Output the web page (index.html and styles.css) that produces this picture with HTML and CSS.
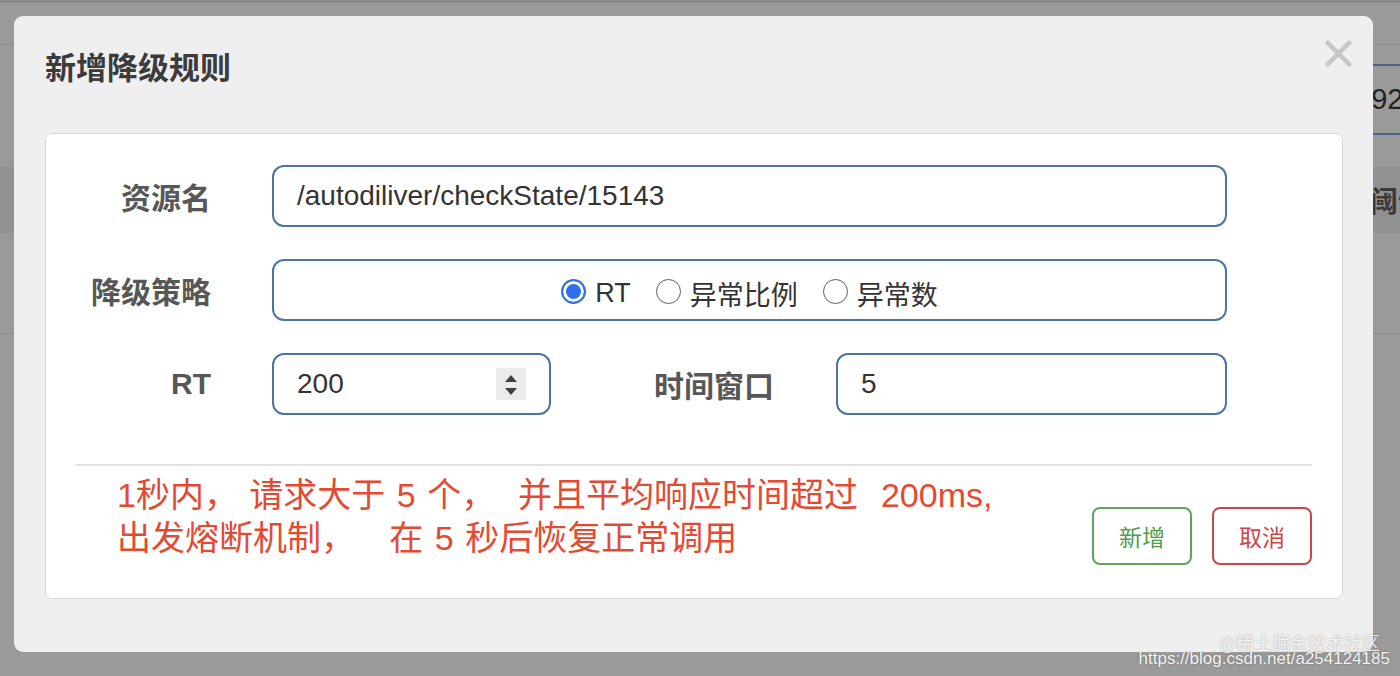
FILE: index.html
```html
<!DOCTYPE html>
<html lang="zh-CN">
<head>
<meta charset="utf-8">
<title>新增降级规则</title>
<link rel="stylesheet" href="styles.css">
</head>
<body>
<div class="page">
  <div class="bg-top"></div>
  <div class="bg-nav"></div>
  <div class="bg-filter"><div class="bg-field">192.168.0.1</div></div>
  <div class="bg-thead"><span class="bg-th">阈值</span></div>
  <div class="bg-tbody"></div>
</div>

<div class="modal">
  <div class="modal-header">
    <h2 class="modal-title">新增降级规则</h2>
    <button class="close" aria-label="关闭">
      <svg width="27" height="27" viewBox="0 0 27 27"><path d="M3 3 L24 24 M24 3 L3 24" stroke="#c6c6c6" stroke-width="4.5" stroke-linecap="square"/></svg>
    </button>
  </div>
  <div class="panel">
    <div class="form">
      <div class="row">
        <label class="label">资源名</label>
        <div class="input grow">/autodiliver/checkState/15143</div>
      </div>
      <div class="row">
        <label class="label">降级策略</label>
        <div class="input grow radios">
          <span class="radio-item"><span class="radio checked"></span><span class="radio-text">RT</span></span>
          <span class="radio-item"><span class="radio"></span><span class="radio-text">异常比例</span></span>
          <span class="radio-item"><span class="radio"></span><span class="radio-text">异常数</span></span>
        </div>
      </div>
      <div class="row">
        <label class="label">RT</label>
        <div class="input small">
          <span class="val">200</span>
          <span class="spinner">
            <svg width="30" height="32" viewBox="0 0 30 32"><path d="M9 14 L21 14 L15 7 Z M9 20 L21 20 L15 27 Z" fill="#404040"/></svg>
          </span>
        </div>
        <label class="label2">时间窗口</label>
        <div class="input grow">5</div>
      </div>
    </div>
    <div class="divider"></div>
    <div class="footer">
      <p class="note">1秒内， 请求大于 5 个，  并且平均响应时间超过  200ms,
出发熔断机制，   在 5 秒后恢复正常调用</p>
      <div class="actions">
        <button class="btn btn-ok">新增</button>
        <button class="btn btn-cancel">取消</button>
      </div>
    </div>
  </div>
</div>

<div class="watermark">
  <span class="wm1">@稀土掘金技术社区</span>
  <span class="wm2">https://blog.csdn.net/a254124185</span>
</div>
</body>
</html>
```

FILE: styles.css
```css
* { box-sizing: border-box; }
html, body {
  margin: 0;
  padding: 0;
  width: 1400px;
  height: 676px;
  overflow: hidden;
  background: #9a9a9a;
  font-family: "Liberation Sans", "Noto Sans CJK SC", sans-serif;
}
.page {
  width: 1400px;
  height: 676px;
  display: flex;
  flex-direction: column;
}
.bg-top { height: 3px; background: #8b8b8b; }
.bg-nav { height: 42px; border-bottom: 1px solid #8c8c8c; }
.bg-filter { height: 122px; display: flex; }
.bg-field {
  margin: 19px 0 0 auto;
  width: 80px;
  height: 71px;
  border-top: 2px solid #4b6185;
  border-bottom: 2px solid #4b6185;
  padding-left: 35px;
  display: flex;
  align-items: center;
  font-size: 29px;
  color: #222;
  white-space: nowrap;
  overflow: hidden;
}
.bg-thead {
  height: 66px;
  background: #919191;
  display: flex;
  align-items: center;
  padding-left: 1370px;
  white-space: nowrap;
  overflow: hidden;
}
.bg-th { font-family: "Noto Sans CJK SC", sans-serif; font-weight: 700; font-size: 28px; color: #3a3a3a; }
.bg-tbody { height: 101px; border-bottom: 1px solid #8c8c8c; }

.modal {
  position: absolute;
  left: 14px;
  top: 16px;
  width: 1359px;
  height: 636px;
  background: #efefef;
  border-radius: 9px;
  display: flex;
  flex-direction: column;
}
.modal-header {
  position: relative;
  height: 117px;
  padding: 29px 0 0 31px;
}
.modal-title {
  margin: 0;
  font-family: "Noto Sans CJK SC", sans-serif;
  font-weight: 700;
  font-size: 31px;
  line-height: 42px;
  color: #3b3b3b;
}
.close {
  position: absolute;
  top: 24px;
  right: 21px;
  width: 27px;
  height: 27px;
  padding: 0;
  border: 0;
  background: none;
  display: block;
}
.close svg { display: block; }

.panel {
  margin: 0 30px 0 31px;
  background: #fff;
  border: 1px solid #d8d8d8;
  border-radius: 7px;
  height: 466px;
  display: flex;
  flex-direction: column;
}
.form {
  padding: 31px 115px 0 0;
  display: flex;
  flex-direction: column;
  gap: 32px;
}
.row {
  display: flex;
  align-items: center;
  height: 62px;
}
.label {
  width: 165px;
  margin-right: 61px;
  text-align: right;
  font-family: "Liberation Sans", "Noto Sans CJK SC", sans-serif;
  font-weight: 700;
  font-size: 30px;
  color: #575757;
}
.label2 {
  margin: 0 60px 0 103px;
  width: 122px;
  font-family: "Noto Sans CJK SC", sans-serif;
  font-weight: 700;
  font-size: 30px;
  color: #575757;
  white-space: nowrap;
}
.input {
  height: 62px;
  border: 2px solid #4c74a5;
  border-radius: 12px;
  display: flex;
  align-items: center;
  padding-left: 23px;
  font-size: 28px;
  color: #333;
}
.grow { flex: 1; }
.small { width: 279px; }
.small .val { flex: 1; }
.spinner {
  width: 30px;
  height: 32px;
  background: #ececec;
  margin-right: 23px;
  display: block;
}
.spinner svg { display: block; }

.radios {
  justify-content: center;
  padding: 7px 0 0 0;
  gap: 25px;
}
.radio-item { display: flex; align-items: center; gap: 9px; }
.radio {
  width: 25px;
  height: 25px;
  border-radius: 50%;
  border: 1.5px solid #5f5f5f;
  background: #fff;
  display: block;
  margin-top: -4px;
}
.radio.checked {
  border: 2px solid #2e6fee;
  background: #2e6fee;
  box-shadow: inset 0 0 0 3px #fff;
}
.radio-text {
  font-family: "Liberation Sans", "Noto Sans CJK SC", sans-serif;
  font-size: 27px;
  color: #333;
}

.divider {
  margin: 49px 30px 0 30px;
  height: 2px;
  background: #e2e2e2;
}
.footer {
  display: flex;
  align-items: flex-start;
  padding: 8px 30px 0 71px;
}
.note {
  margin: 0;
  font-family: "Liberation Sans", "Noto Sans CJK SC", sans-serif;
  font-size: 34px;
  line-height: 43px;
  color: #e44a31;
  word-spacing: 2px;
  white-space: pre;
}
.actions {
  margin-left: auto;
  margin-top: 33px;
  display: flex;
  gap: 20px;
}
.btn {
  width: 100px;
  height: 58px;
  background: #fff;
  border-radius: 8px;
  font-family: "Noto Sans CJK SC", sans-serif;
  font-size: 23px;
  padding: 0;
}
.btn-ok { border: 2px solid #5aa65a; color: #4d9e4d; }
.btn-cancel { border: 2px solid #c9474b; color: #c9474b; }

.watermark {
  position: absolute;
  right: 10px;
  bottom: 8px;
  display: flex;
  flex-direction: column;
  align-items: flex-end;
  color: #f4f4f4;
  text-shadow: 0 0 2px rgba(0,0,0,0.35);
  line-height: 15px;
}
.wm1 { font-family: "Noto Sans CJK SC", sans-serif; font-size: 18px; margin-right: 10px; opacity: 0.85; }
.wm2 { font-size: 17px; line-height: 18px; }
```
